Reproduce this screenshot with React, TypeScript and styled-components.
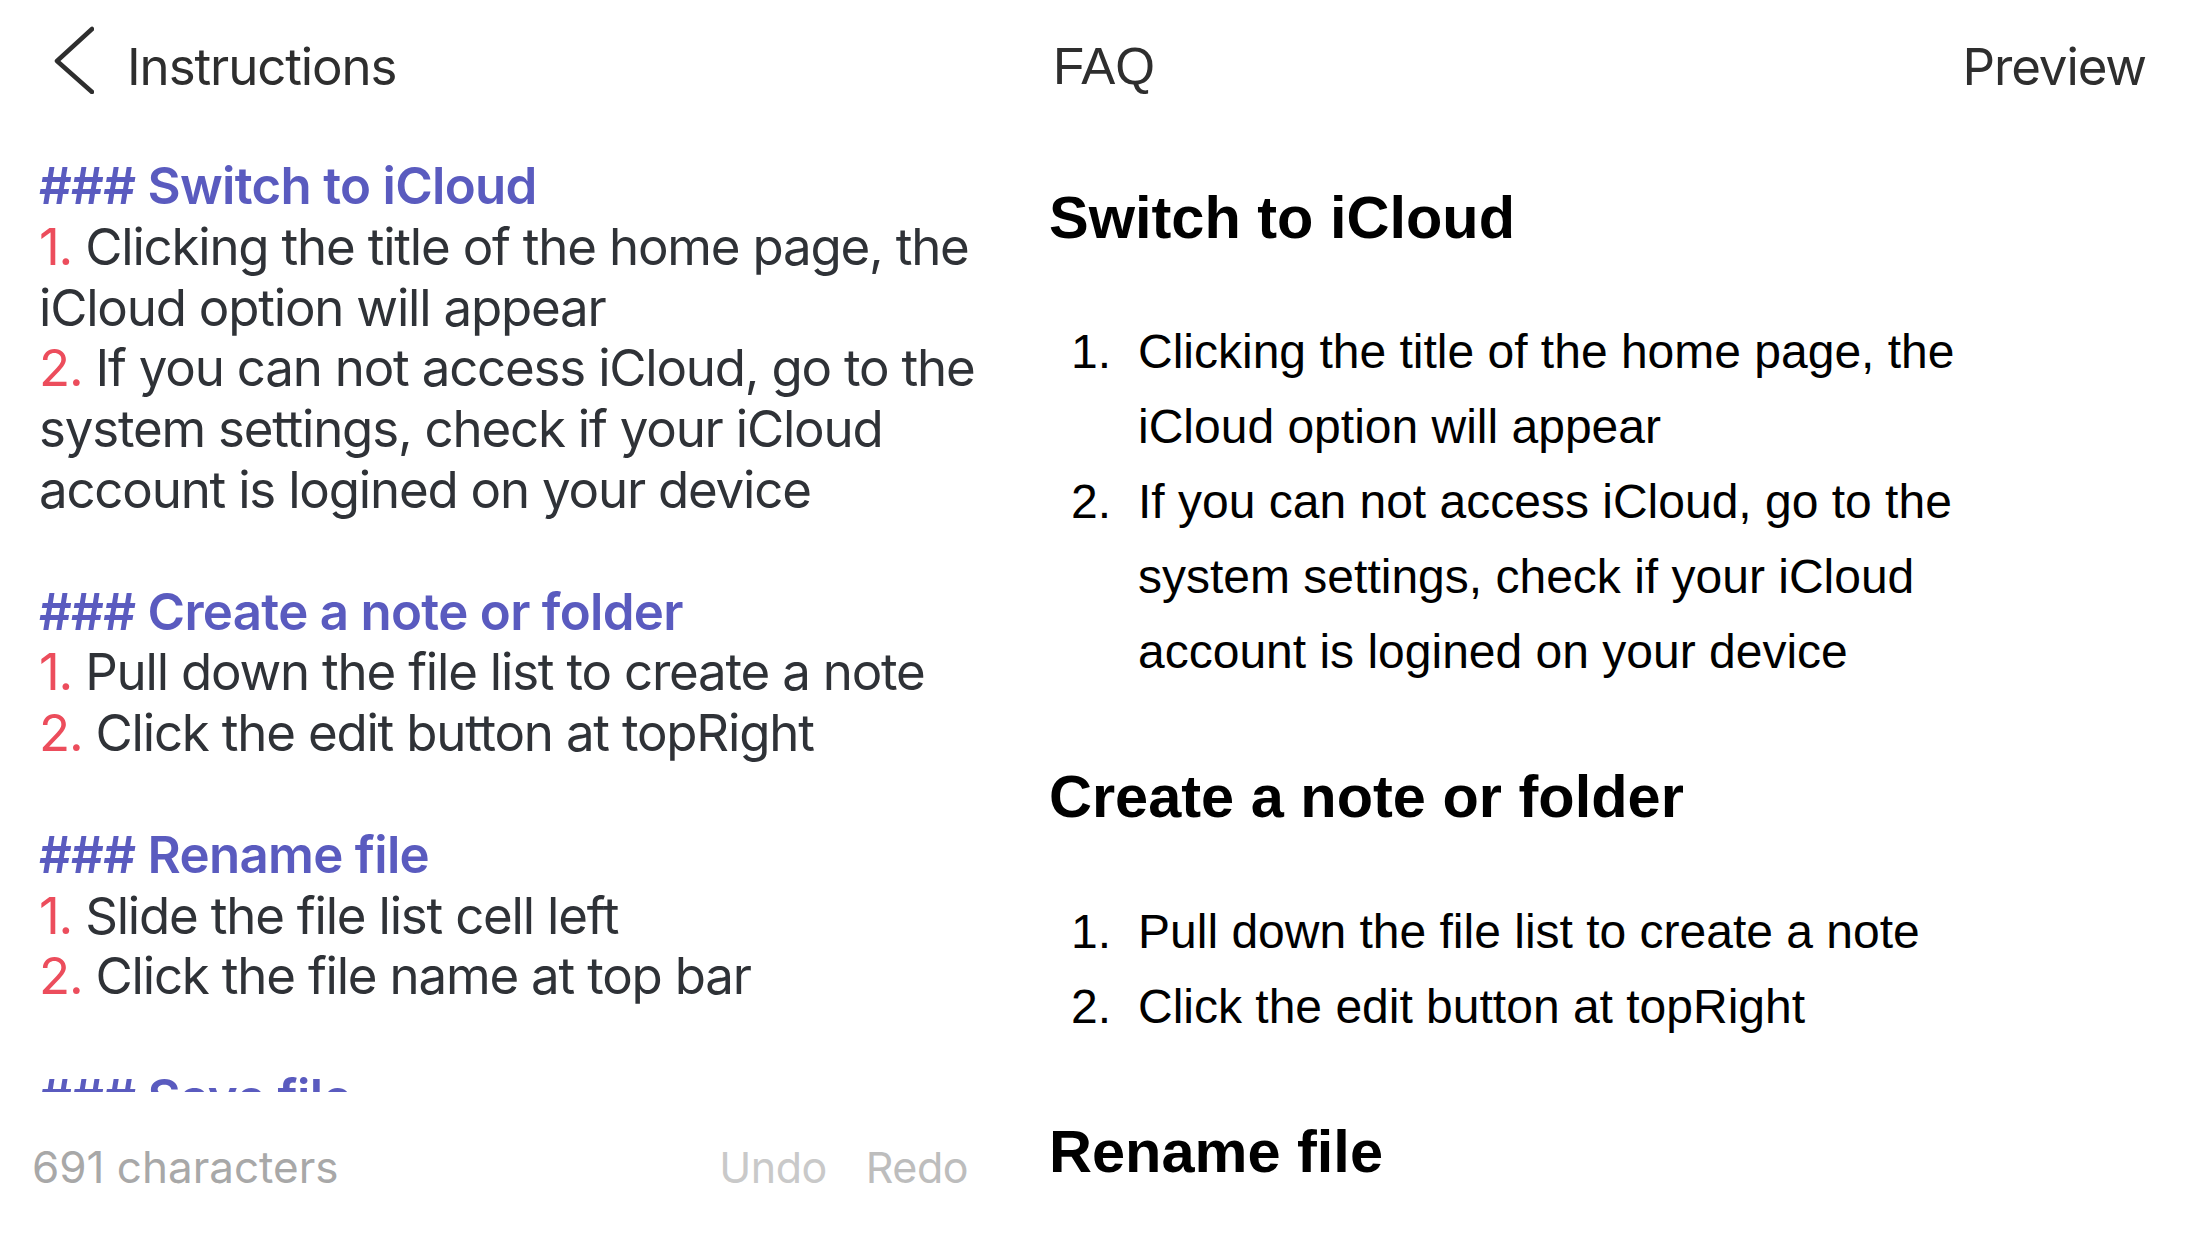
import React from "react";
import styled, { createGlobalStyle } from "styled-components";

const GlobalStyle = createGlobalStyle`
  html, body {
    margin: 0;
    padding: 0;
    background: #ffffff;
  }
  body {
    width: 2208px;
    height: 1242px;
    overflow: hidden;
    -webkit-font-smoothing: antialiased;
  }
`;

const Page = styled.div`
  width: 2208px;
  height: 1242px;
  display: flex;
  flex-direction: column;
  background: #ffffff;
  font-family: Inter, "Noto Sans", sans-serif;
`;

const NavBar = styled.header`
  height: 132px;
  flex: 0 0 132px;
  display: grid;
  grid-template-columns: 1fr auto 1fr;
  align-items: center;
  padding: 0 62px;
  box-sizing: border-box;
`;

const BackButton = styled.div`
  display: flex;
  align-items: center;
  gap: 33px;
  justify-self: start;
  margin-left: -8px;
`;

const Chevron = styled.svg`
  width: 40px;
  height: 68px;
  margin-bottom: 12px;
  flex: 0 0 auto;
`;

const NavText = styled.span<{ $serif?: boolean }>`
  font-family: ${(p) => (p.$serif ? `"Liberation Sans", Arial, sans-serif` : `Inter, "Noto Sans", sans-serif`)};
  font-size: 51px;
  line-height: 1;
  color: #2e2e2e;
  letter-spacing: ${(p) => (p.$serif ? "0" : "-1.1px")};
`;

const RightAction = styled(NavText)`
  justify-self: end;
`;

const Body = styled.main`
  flex: 1;
  display: flex;
  min-height: 0;
`;

const EditorPane = styled.section`
  width: 1000px;
  flex: 0 0 1000px;
  display: flex;
  flex-direction: column;
`;

const EditorScroll = styled.div`
  flex: 1;
  overflow: hidden;
  padding: 24px 32px 0 39px;
  box-sizing: border-box;
`;

const Line = styled.div<{ $heading?: boolean }>`
  height: 60.8px;
  font-size: 51px;
  line-height: 60.8px;
  white-space: pre;
  letter-spacing: ${(p) => (p.$heading ? "-0.7px" : "-1.2px")};
  font-weight: ${(p) => (p.$heading ? 600 : 400)};
  color: ${(p) => (p.$heading ? "#5a5bbf" : "#2f3237")};
`;

const Num = styled.span`
  color: #ec4d5c;
`;

const Footer = styled.footer`
  height: 150px;
  flex: 0 0 150px;
  display: flex;
  align-items: center;
  justify-content: space-between;
  padding: 0 32px;
  box-sizing: border-box;
`;

const CharCount = styled.span`
  font-size: 44px;
  line-height: 1;
  color: #a8a8a8;
  letter-spacing: 0;
`;

const HistoryGroup = styled.div`
  display: flex;
  gap: 39px;
`;

const HistoryButton = styled.span<{ $tone: string }>`
  font-size: 43px;
  line-height: 1;
  color: ${(p) => p.$tone};
  letter-spacing: -0.5px;
`;

const PreviewPane = styled.section`
  flex: 1;
  overflow: hidden;
  padding: 50px 64px 0 49px;
  box-sizing: border-box;
  font-family: "Liberation Sans", Arial, Helvetica, sans-serif;
  color: #000000;
`;

const PreviewHeading = styled.h3`
  margin: 0 0 61px;
  font-size: 59.5px;
  line-height: 71.4px;
  font-weight: 700;
  white-space: nowrap;
`;

const PreviewList = styled.ol`
  list-style: none;
  margin: 0 0 72px;
  padding: 0;
`;

const PreviewItem = styled.li`
  display: grid;
  grid-template-columns: 89px 1fr;
  font-size: 48px;
  line-height: 75px;
  white-space: nowrap;
`;

const ItemNumber = styled.span`
  text-align: right;
  padding-right: 27px;
`;

type Section = {
  title: string;
  items: string[][];
};

const editorLines: { heading?: boolean; num?: string; text: string }[] = [
  { heading: true, text: "### Switch to iCloud" },
  { num: "1.", text: " Clicking the title of the home page, the" },
  { text: "iCloud option will appear" },
  { num: "2.", text: " If you can not access iCloud, go to the" },
  { text: "system settings, check if your iCloud" },
  { text: "account is logined on your device" },
  { text: "" },
  { heading: true, text: "### Create a note or folder" },
  { num: "1.", text: " Pull down the file list to create a note" },
  { num: "2.", text: " Click the edit button at topRight" },
  { text: "" },
  { heading: true, text: "### Rename file" },
  { num: "1.", text: " Slide the file list cell left" },
  { num: "2.", text: " Click the file name at top bar" },
  { text: "" },
  { heading: true, text: "### Save file" },
];

const sections: Section[] = [
  {
    title: "Switch to iCloud",
    items: [
      ["Clicking the title of the home page, the", "iCloud option will appear"],
      [
        "If you can not access iCloud, go to the",
        "system settings, check if your iCloud",
        "account is logined on your device",
      ],
    ],
  },
  {
    title: "Create a note or folder",
    items: [["Pull down the file list to create a note"], ["Click the edit button at topRight"]],
  },
  {
    title: "Rename file",
    items: [],
  },
];

export default function App() {
  return (
    <>
      <GlobalStyle />
      <Page>
        <NavBar>
          <BackButton>
            <Chevron viewBox="0 0 40 68">
              <polyline
                points="38,3 3,35 38,66"
                fill="none"
                stroke="#2e2e2e"
                strokeWidth="4.5"
                strokeLinecap="round"
                strokeLinejoin="round"
              />
            </Chevron>
            <NavText>Instructions</NavText>
          </BackButton>
          <NavText $serif>FAQ</NavText>
          <RightAction>Preview</RightAction>
        </NavBar>
        <Body>
          <EditorPane>
            <EditorScroll>
              {editorLines.map((l, i) => (
                <Line key={i} $heading={l.heading}>
                  {l.num && <Num>{l.num}</Num>}
                  {l.text}
                </Line>
              ))}
            </EditorScroll>
            <Footer>
              <CharCount>691 characters</CharCount>
              <HistoryGroup>
                <HistoryButton $tone="#c9c9c9">Undo</HistoryButton>
                <HistoryButton $tone="#bdbdbd">Redo</HistoryButton>
              </HistoryGroup>
            </Footer>
          </EditorPane>
          <PreviewPane>
            {sections.map((s) => (
              <React.Fragment key={s.title}>
                <PreviewHeading>{s.title}</PreviewHeading>
                {s.items.length > 0 && (
                  <PreviewList>
                    {s.items.map((lines, i) => (
                      <PreviewItem key={i}>
                        <ItemNumber>{i + 1}.</ItemNumber>
                        <span>
                          {lines.map((t, j) => (
                            <React.Fragment key={j}>
                              {j > 0 && <br />}
                              {t}
                            </React.Fragment>
                          ))}
                        </span>
                      </PreviewItem>
                    ))}
                  </PreviewList>
                )}
              </React.Fragment>
            ))}
          </PreviewPane>
        </Body>
      </Page>
    </>
  );
}
